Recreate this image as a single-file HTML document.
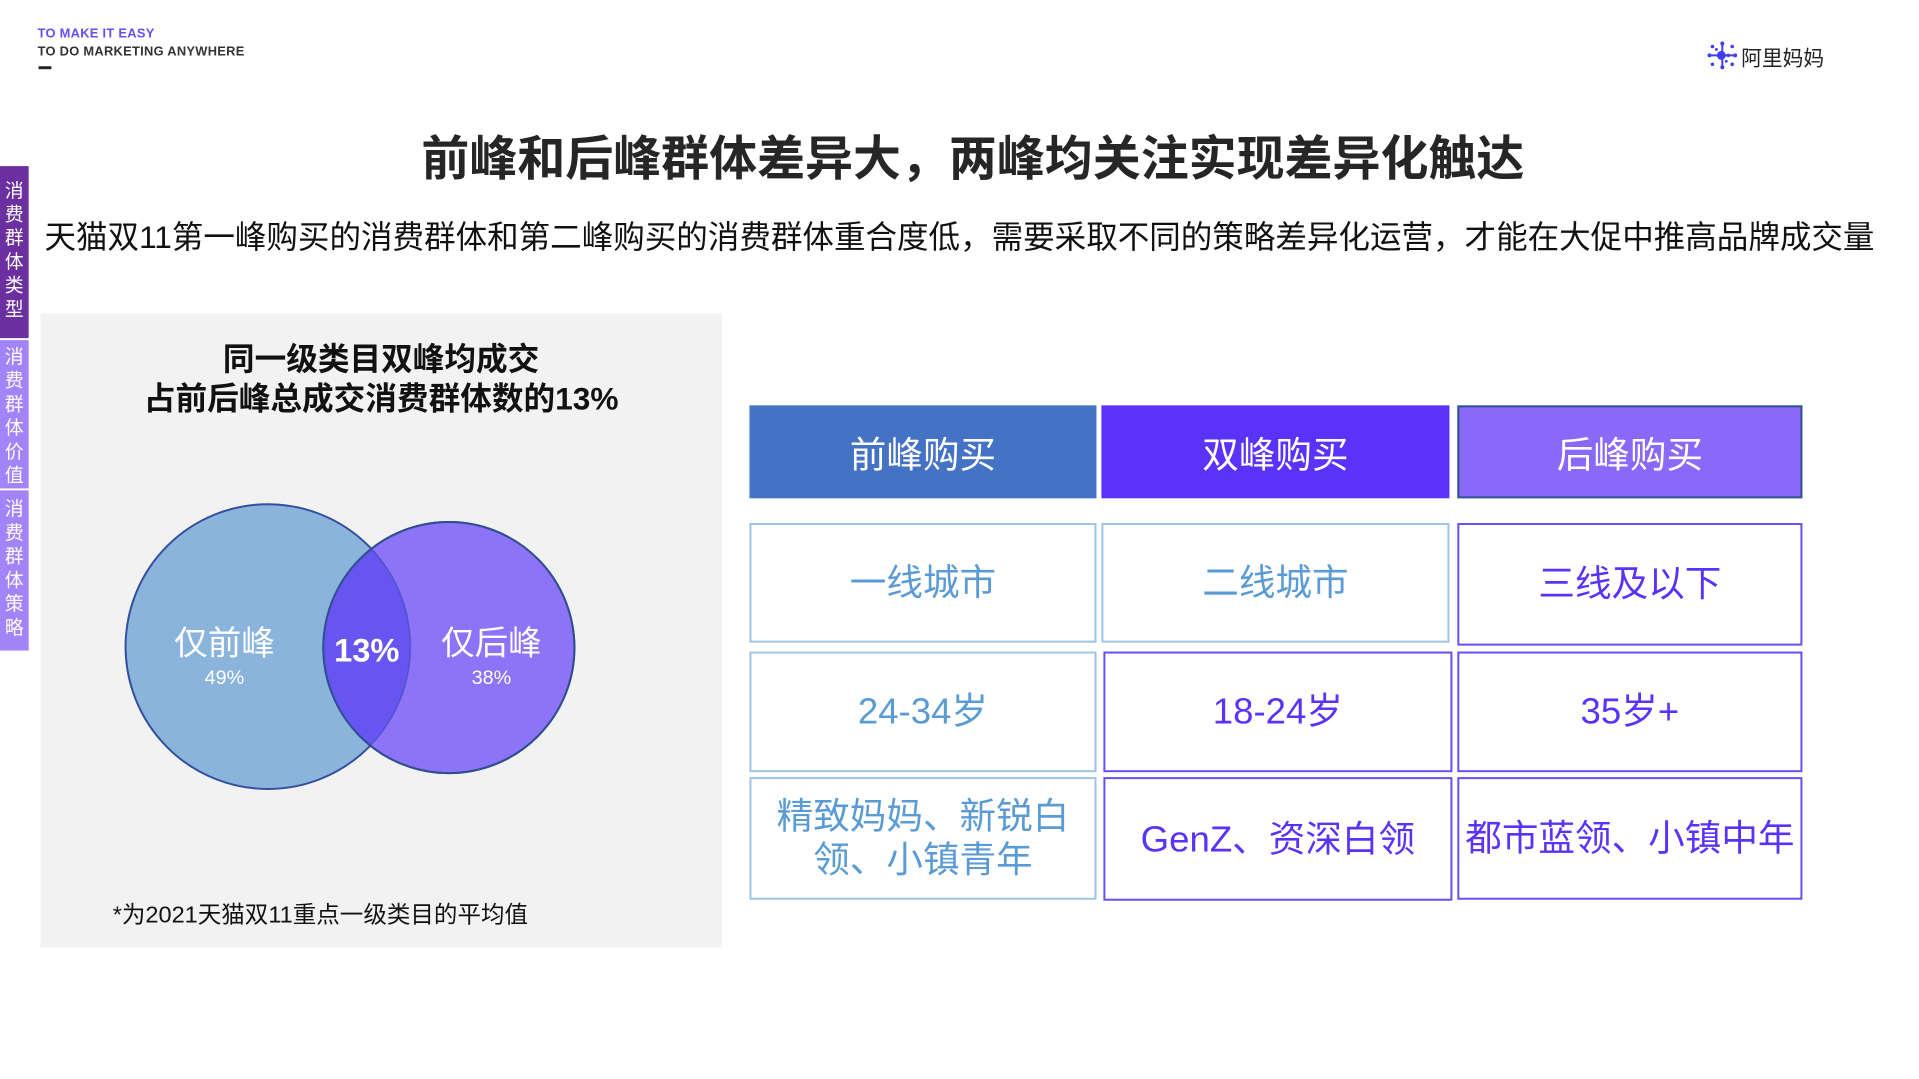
<!DOCTYPE html>
<html><head><meta charset="utf-8">
<style>
*{margin:0;padding:0;box-sizing:border-box}
body{width:1919px;height:1079px;background:#fff;position:relative;overflow:hidden;font-family:"Liberation Sans","Noto Sans CJK SC",sans-serif}
#w{position:absolute;left:0;top:0;width:1941px;height:1091px;transform:scale(0.9887);transform-origin:0 0}
.a{position:absolute}
.tab{position:absolute;left:0;width:29px;color:#fff;font-size:19px;line-height:24px;text-align:center;padding-top:14px}
.h{position:absolute;top:410px;height:94px;color:#fff;font-size:37px;display:flex;align-items:center;justify-content:center}
.c{position:absolute;border:2px solid #9dc3e6;color:#5b9bd5;font-size:37px;display:flex;align-items:center;justify-content:center;text-align:center;line-height:44px;background:#fff}
.p{border-color:#6a4cf5;color:#5a32fa}
</style></head><body><div id="w">
<div class="a" style="left:38px;top:26px;font-size:13px;font-weight:bold;color:#6a4cf5;letter-spacing:0.3px">TO MAKE IT EASY</div>
<div class="a" style="left:38px;top:44px;font-size:13px;font-weight:bold;color:#333;letter-spacing:0.3px">TO DO MARKETING ANYWHERE</div>
<div class="a" style="left:39px;top:67px;width:13px;height:3px;background:#222"></div>

<svg class="a" style="left:1724px;top:40px" width="36" height="32" viewBox="0 0 36 32">
<g fill="#3f3ff0">
<circle cx="17" cy="16" r="4.5"/>
<circle cx="18" cy="4" r="2"/><circle cx="18" cy="28" r="2"/>
<circle cx="5" cy="16" r="2"/><circle cx="31" cy="16" r="2"/>
<circle cx="8" cy="7" r="1.8"/><circle cx="28" cy="7" r="1.8"/>
<circle cx="8" cy="25" r="1.8"/><circle cx="28" cy="25" r="1.8"/>
<circle cx="24" cy="16" r="1.8"/><circle cx="12" cy="10" r="1.5"/><circle cx="22" cy="22" r="1.5"/>
<rect x="17" y="5" width="2" height="22"/><rect x="6" y="15" width="24" height="2"/>
</g></svg>
<div class="a" style="left:1761px;top:43px;font-size:21px;color:#222">阿里妈妈</div>

<div class="tab" style="top:168px;height:174px;background:#6b2fa0">消<br>费<br>群<br>体<br>类<br>型</div>
<div class="tab" style="top:344px;height:150px;background:#a384f8;padding-top:6px">消<br>费<br>群<br>体<br>价<br>值</div>
<div class="tab" style="top:496px;height:162px;background:#a384f8;padding-top:8px">消<br>费<br>群<br>体<br>策<br>略</div>

<div class="a" style="left:0;width:1968px;top:121px;text-align:center;font-size:48.5px;font-weight:bold;color:#262626">前峰和后峰群体差异大，两峰均关注实现差异化触达</div>
<div class="a" style="left:45px;top:215px;font-size:31.9px;color:#111;white-space:nowrap">天猫双11第一峰购买的消费群体和第二峰购买的消费群体重合度低，需要采取不同的策略差异化运营，才能在大促中推高品牌成交量</div>

<div class="a" style="left:41px;top:317px;width:689px;height:641px;background:#f2f2f2"></div>
<div class="a" style="left:41px;width:689px;top:343px;text-align:center;font-size:32px;font-weight:bold;line-height:40px;color:#111">同一级类目双峰均成交<br>占前后峰总成交消费群体数的13%</div>
<svg class="a" style="left:41px;top:317px" width="689" height="641">
<circle cx="230" cy="337" r="144" fill="#8ab4dc" stroke="#2f4f8f" stroke-width="2"/>
<circle cx="413" cy="338" r="127" fill="#866cf8" fill-opacity="0.95" stroke="#2f4f8f" stroke-width="2"/>
<clipPath id="cl"><circle cx="230" cy="337" r="144"/></clipPath>
<circle cx="413" cy="338" r="127" fill="#6655f0" clip-path="url(#cl)"/>
<circle cx="230" cy="337" r="144" fill="none" stroke="#3a4fb0" stroke-width="1.5" stroke-opacity="0.6"/>
<circle cx="413" cy="338" r="127" fill="none" stroke="#2f4f8f" stroke-width="2"/>
<g fill="#fff" text-anchor="middle" font-family="Liberation Sans,Noto Sans CJK SC,sans-serif">
<text x="186" y="345" font-size="34">仅前峰</text>
<text x="186" y="375" font-size="20">49%</text>
<text x="330" y="352" font-size="33" font-weight="bold">13%</text>
<text x="456" y="345" font-size="34">仅后峰</text>
<text x="456" y="375" font-size="20">38%</text>
</g></svg>
<div class="a" style="left:114px;top:905px;font-size:23.8px;color:#111">*为2021天猫双11重点一级类目的平均值</div>

<div class="h" style="left:758px;width:351px;background:#4472c4">前峰购买</div>
<div class="h" style="left:1114px;width:352px;background:#5a32fa">双峰购买</div>
<div class="h" style="left:1474px;width:349px;background:#8a68f8;border:2px solid #2f528f">后峰购买</div>

<div class="c" style="left:758px;top:529px;width:351px;height:121px">一线城市</div>
<div class="c" style="left:1114px;top:529px;width:352px;height:121px">二线城市</div>
<div class="c p" style="left:1474px;top:529px;width:349px;height:124px">三线及以下</div>

<div class="c" style="left:758px;top:659px;width:351px;height:122px">24-34岁</div>
<div class="c p" style="left:1116px;top:659px;width:353px;height:122px">18-24岁</div>
<div class="c p" style="left:1474px;top:659px;width:349px;height:122px">35岁+</div>

<div class="c" style="left:758px;top:786px;width:351px;height:124px">精致妈妈、新锐白<br>领、小镇青年</div>
<div class="c p" style="left:1116px;top:786px;width:353px;height:125px">GenZ、资深白领</div>
<div class="c p" style="left:1474px;top:786px;width:349px;height:124px">都市蓝领、小镇中年</div>
</div></body></html>
